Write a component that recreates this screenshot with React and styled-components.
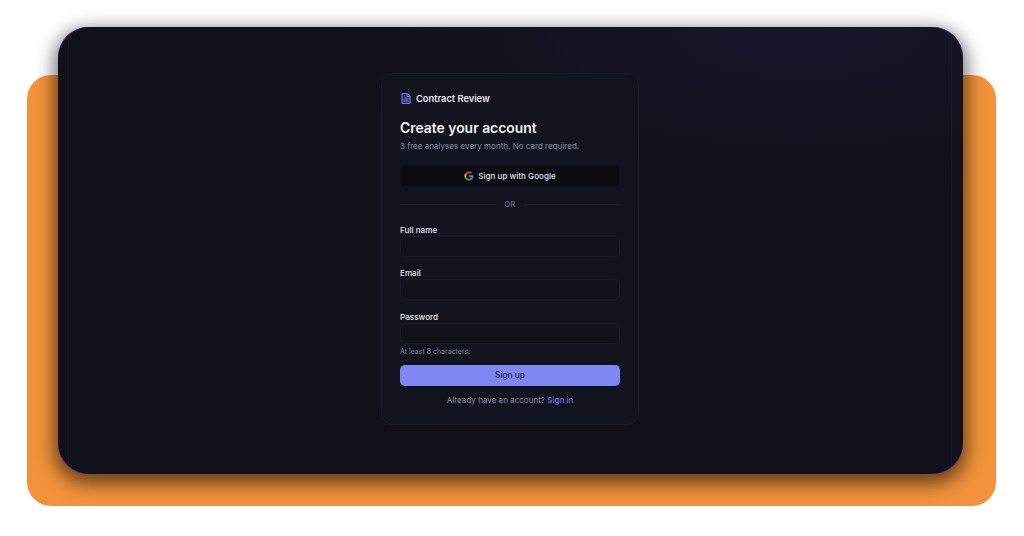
import React from 'react';
import styled, { createGlobalStyle } from 'styled-components';

const Global = createGlobalStyle`
  html, body { margin: 0; padding: 0; background: #fff; }
  body { font-family: Inter, "Liberation Sans", sans-serif; }
`;

const Stage = styled.div`
  display: grid;
  width: 1024px;
  height: 536px;
  overflow: hidden;
`;

const Backdrop = styled.div`
  grid-area: 1 / 1;
  margin: 75px 28px 30px 27px;
  background: #f2923a;
  border-radius: 24px;
`;

const Window = styled.main`
  grid-area: 1 / 1;
  margin: 27px 61px 62px 58px;
  display: flex;
  border-radius: 30px;
  background: #4a2590;
  box-shadow: 0 6px 18px 4px rgba(0, 0, 0, 0.55);
`;

const Surface = styled.div`
  flex: 1;
  display: flex;
  overflow: hidden;
  border-radius: 32px;
  background: radial-gradient(ellipse 480px 190px at 82% 0%, #17162a 0%, #11121d 70%, #10111b 100%);
`;

const Rails = styled.div`
  flex: 1;
  display: flex;
  justify-content: center;
  align-items: flex-start;
  margin: 0 11px 0 10px;
  padding-top: 46px;
  border-left: 1px solid #191a22;
  border-right: 1px solid #191a22;
`;

const Card = styled.section`
  box-sizing: border-box;
  width: 258px;
  height: 352px;
  padding: 16px 18px 0;
  background: #11131f;
  border: 1px solid #191b28;
  border-radius: 12px;
`;

const Brand = styled.div`
  display: flex;
  align-items: center;
  gap: 4px;
  height: 17px;
  font-size: 9.3px;
  font-weight: 600;
  color: #e8eaf2;
`;

const Title = styled.h1`
  margin: 11px 0 0;
  font-size: 13.9px;
  line-height: 20px;
  font-weight: 600;
  color: #f3f4f8;
`;

const Sub = styled.p`
  margin: 1.5px 0 0;
  font-size: 8.06px;
  line-height: 12px;
  color: #8790a3;
`;

const GoogleButton = styled.button`
  display: flex;
  align-items: center;
  justify-content: center;
  gap: 4px;
  width: 100%;
  height: 20px;
  margin-top: 14.5px;
  padding: 0;
  border: 1px solid #0d0e16;
  border-radius: 5px;
  background: #0b0c13;
  color: #dfe2ea;
  font: 500 8.1px Inter, sans-serif;
`;

const Divider = styled.div`
  display: flex;
  align-items: center;
  gap: 8px;
  margin-top: 12px;
  height: 12px;
  font-size: 7px;
  letter-spacing: 0.6px;
  color: #868ea2;
  &::before, &::after { content: ""; flex: 1; height: 1px; background: #1a1c29; }
`;

const Field = styled.div`
  margin-top: ${p => p.$first ? '13.5px' : '10.5px'};
`;

const Label = styled.label`
  display: block;
  font-size: 8.15px;
  line-height: 12px;
  font-weight: 500;
  color: #e6e8ef;
`;

const Input = styled.input`
  display: block;
  box-sizing: border-box;
  width: 100%;
  height: 21px;
  background: #10121c;
  border: 1px solid #191b28;
  border-radius: 5px;
  outline: none;
`;

const Hint = styled.p`
  margin: 3px 0 0;
  font-size: 7px;
  line-height: 10px;
  color: #7e879b;
`;

const Submit = styled.button`
  display: block;
  width: 100%;
  height: 21px;
  margin-top: 8px;
  padding: 0;
  border: 0;
  border-radius: 5px;
  background: #7f87f5;
  color: #1a1c30;
  font: 500 8.3px Inter, sans-serif;
`;

const Footer = styled.p`
  margin: 8.5px 0 0;
  text-align: center;
  font-size: 8.05px;
  line-height: 12px;
  color: #8790a3;
`;

const SignIn = styled.a`
  color: #6f76e6;
  font-weight: 500;
`;

function DocIcon() {
  return (
    <svg width="12" height="13" viewBox="0 0 24 24" fill="#2c2f6b" stroke="#7176e0" strokeWidth="2.2" strokeLinecap="round" strokeLinejoin="round">
      <path d="M14 2H6a2 2 0 0 0-2 2v16a2 2 0 0 0 2 2h12a2 2 0 0 0 2-2V8z" />
      <path d="M14 2v6h6" />
      <path d="M8 13h8M8 17h8" />
    </svg>
  );
}

function GoogleIcon() {
  return (
    <svg width="10" height="10" viewBox="0 0 24 24">
      <path fill="#4285F4" d="M22.56 12.25c0-.78-.07-1.53-.2-2.25H12v4.26h5.92c-.26 1.37-1.04 2.53-2.21 3.31v2.77h3.57c2.08-1.92 3.28-4.74 3.28-8.09z" />
      <path fill="#34A853" d="M12 23c2.97 0 5.46-.98 7.28-2.66l-3.57-2.77c-.98.66-2.23 1.06-3.71 1.06-2.86 0-5.29-1.93-6.16-4.53H2.18v2.84C3.99 20.53 7.7 23 12 23z" />
      <path fill="#FBBC05" d="M5.84 14.09c-.22-.66-.35-1.36-.35-2.09s.13-1.43.35-2.09V7.07H2.18C1.43 8.55 1 10.22 1 12s.43 3.45 1.18 4.93l3.66-2.84z" />
      <path fill="#EA4335" d="M12 5.38c1.62 0 3.06.56 4.21 1.64l3.15-3.15C17.45 2.09 14.97 1 12 1 7.7 1 3.99 3.47 2.18 7.07l3.66 2.84c.87-2.6 3.3-4.53 6.16-4.53z" />
    </svg>
  );
}

export default function App() {
  return (
    <Stage>
      <Global />
      <Backdrop />
      <Window>
        <Surface>
          <Rails>
            <Card>
              <Brand><DocIcon />Contract Review</Brand>
              <Title>Create your account</Title>
              <Sub>3 free analyses every month. No card required.</Sub>
              <GoogleButton><GoogleIcon />Sign up with Google</GoogleButton>
              <Divider>OR</Divider>
              <Field $first>
                <Label>Full name</Label>
                <Input type="text" />
              </Field>
              <Field>
                <Label>Email</Label>
                <Input type="email" />
              </Field>
              <Field>
                <Label>Password</Label>
                <Input type="password" />
                <Hint>At least 8 characters.</Hint>
              </Field>
              <Submit>Sign up</Submit>
              <Footer>Already have an account? <SignIn>Sign in</SignIn></Footer>
            </Card>
          </Rails>
        </Surface>
      </Window>
    </Stage>
  );
}
